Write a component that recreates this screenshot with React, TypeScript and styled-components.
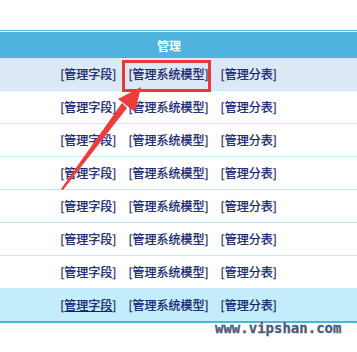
import { createGlobalStyle, styled } from 'styled-components';

const rows = [0, 1, 2, 3, 4, 5, 6, 7];
const links = ['管理字段', '管理系统模型', '管理分表'];

export default function App() {
  return (
    <Page>
      <GlobalStyle />
      <Table>
        <HeadRow>管理</HeadRow>
        {rows.map((i) => (
          <Row key={i} $tone={i === 0 ? 'blue' : i === 7 ? 'hover' : 'plain'}>
            {links.map((label, j) => (
              <LinkItem key={label}>
                [<Link $under={i === 7 && j === 0}>{label}</Link>]
              </LinkItem>
            ))}
          </Row>
        ))}
      </Table>

      <Marker />
      <Arrow width="357" height="352" viewBox="0 0 357 352">
        <polygon points="61,189 63,190 127,108 122,103" fill="#ee3b3b" />
        <polygon points="141,87 135,112 118,99" fill="#ee3b3b" />
      </Arrow>
      <Watermark>www.vipshan.com</Watermark>
    </Page>
  );
}

const GlobalStyle = createGlobalStyle`
  body {
    margin: 0;
    background: #fff;
  }
`;

const Page = styled.div`
  position: relative;
  width: 357px;
  height: 352px;
  overflow: hidden;
  padding-top: 30px;
  box-sizing: border-box;
  font-family: "Noto Sans CJK SC", "Noto Sans", sans-serif;
`;

const Table = styled.div`
  display: flex;
  flex-direction: column;
  border-top: 1px solid #4fb3de;
  border-bottom: 2px solid #4fb3de;
`;

const HeadRow = styled.div`
  height: 26px;
  margin-top: 1px;
  background: #4fb3de;
  color: #fff;
  font-weight: bold;
  font-size: 12px;
  display: flex;
  align-items: center;
  justify-content: center;
  padding-right: 19px;
`;

const tones = {
  blue: '#dce9f5',
  plain: '#ffffff',
  hover: '#c4edfc',
};

const Row = styled.div<{ $tone: keyof typeof tones }>`
  height: 32px;
  background: ${(p) => tones[p.$tone]};
  border-top: ${(p) => (p.$tone === 'blue' ? 'none' : '1px solid #cbeaf8')};
  display: flex;
  align-items: center;
  justify-content: center;
  gap: 12px;
  padding-right: 20px;
  font-size: 12px;
  color: #10206e;
  -webkit-text-stroke: 0.25px #10206e;
`;

const LinkItem = styled.span`
  white-space: nowrap;
  line-height: 16px;
`;

const Link = styled.span<{ $under?: boolean }>`
  color: #10206e;
  text-decoration: ${(p) => (p.$under ? 'underline' : 'none')};
`;

const Marker = styled.div`
  position: absolute;
  left: 122px;
  top: 60px;
  width: 89px;
  height: 32px;
  box-sizing: border-box;
  border: 3px solid #e8393a;
`;

const Arrow = styled.svg`
  position: absolute;
  left: 0;
  top: 0;
`;

const Watermark = styled.div`
  position: absolute;
  left: 215px;
  top: 320px;
  font-family: "DejaVu Sans Mono", monospace;
  font-weight: bold;
  font-size: 14px;
  color: #4b5a7a;
  -webkit-text-stroke: 0.3px #4b5a7a;
  text-shadow: 0 0 1px #fff, 0 0 1px #fff;
`;
